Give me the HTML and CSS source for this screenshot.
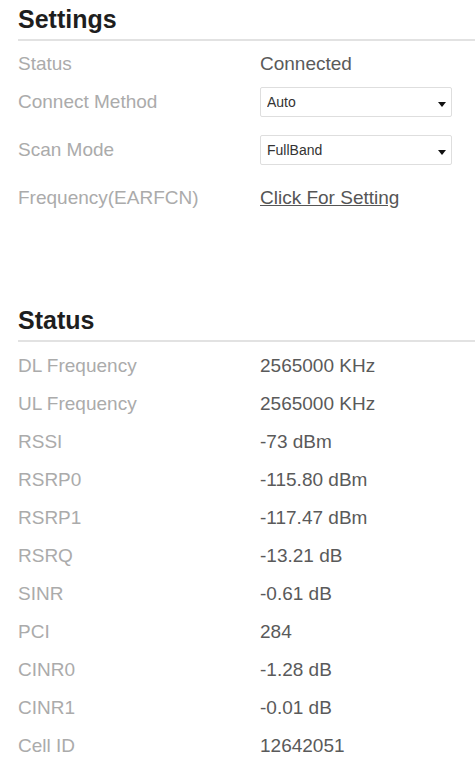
FILE: index.html
```html
<!DOCTYPE html>
<html lang="en">
<head>
    <meta charset="UTF-8">
    <meta name="viewport" content="width=device-width, initial-scale=1.0">
    <title>LTE Status</title>
    <link rel="stylesheet" href="styles.css">
</head>
<body>

    <div class="section settings">
        <h2 class="section-title">Settings</h2>
        <div class="rows">
            <div class="row">
                <span class="label">Status</span>
                <span class="value">Connected</span>
            </div>
            <div class="row row-select">
                <span class="label">Connect Method</span>
                <span class="select-wrap">
                    <select class="select">
                        <option>Auto</option>
                        <option>Manual</option>
                    </select>
                </span>
            </div>
            <div class="row row-select">
                <span class="label">Scan Mode</span>
                <span class="select-wrap">
                    <select class="select">
                        <option>FullBand</option>
                        <option>Frequency</option>
                    </select>
                </span>
            </div>
            <div class="row">
                <span class="label">Frequency(EARFCN)</span>
                <a class="value link" href="#">Click For Setting</a>
            </div>
        </div>
    </div>

    <div class="section status">
        <h2 class="section-title">Status</h2>
        <div class="rows">
            <div class="row"><span class="label">DL Frequency</span><span class="value">2565000 KHz</span></div>
            <div class="row"><span class="label">UL Frequency</span><span class="value">2565000 KHz</span></div>
            <div class="row"><span class="label">RSSI</span><span class="value">-73 dBm</span></div>
            <div class="row"><span class="label">RSRP0</span><span class="value">-115.80 dBm</span></div>
            <div class="row"><span class="label">RSRP1</span><span class="value">-117.47 dBm</span></div>
            <div class="row"><span class="label">RSRQ</span><span class="value">-13.21 dB</span></div>
            <div class="row"><span class="label">SINR</span><span class="value">-0.61 dB</span></div>
            <div class="row"><span class="label">PCI</span><span class="value">284</span></div>
            <div class="row"><span class="label">CINR0</span><span class="value">-1.28 dB</span></div>
            <div class="row"><span class="label">CINR1</span><span class="value">-0.01 dB</span></div>
            <div class="row"><span class="label">Cell ID</span><span class="value">12642051</span></div>
        </div>
    </div>

</body>
</html>
```

FILE: styles.css
```css
body {
    margin: 0;
    padding-left: 18px;
    font-family: "Liberation Sans", Arial, sans-serif;
    background-color: #fff;
    overflow: hidden;
}

.section-title {
    margin: 4px 0 0 0;
    padding-bottom: 5px;
    font-size: 25px;
    line-height: 30px;
    font-weight: bold;
    color: #1e1e1e;
    border-bottom: 2px solid #e2e2e2;
}

.status {
    margin-top: 88px;
}

.rows {
    padding-top: 4px;
}

.status .rows {
    padding-top: 5px;
}

.row {
    display: flex;
    align-items: center;
    height: 38px;
    font-size: 19px;
}

.row-select {
    margin-bottom: 10px;
}

.label {
    width: 242px;
    flex-shrink: 0;
    color: #ababab;
}

.value {
    color: #5a5a5a;
}

.link {
    color: #555;
    text-decoration: underline;
}

.select-wrap {
    position: relative;
    display: inline-block;
}

.select {
    appearance: none;
    -webkit-appearance: none;
    width: 192px;
    height: 30px;
    margin: 0;
    padding: 0 20px 0 6px;
    border: 1px solid #dedede;
    border-radius: 2px;
    background-color: #fff;
    font-family: "Liberation Sans", Arial, sans-serif;
    font-size: 14px;
    color: #333;
    outline: none;
}

.select-wrap::after {
    content: "";
    position: absolute;
    right: 6px;
    top: 15px;
    border-left: 4px solid transparent;
    border-right: 4px solid transparent;
    border-top: 5px solid #111;
    pointer-events: none;
}
```
